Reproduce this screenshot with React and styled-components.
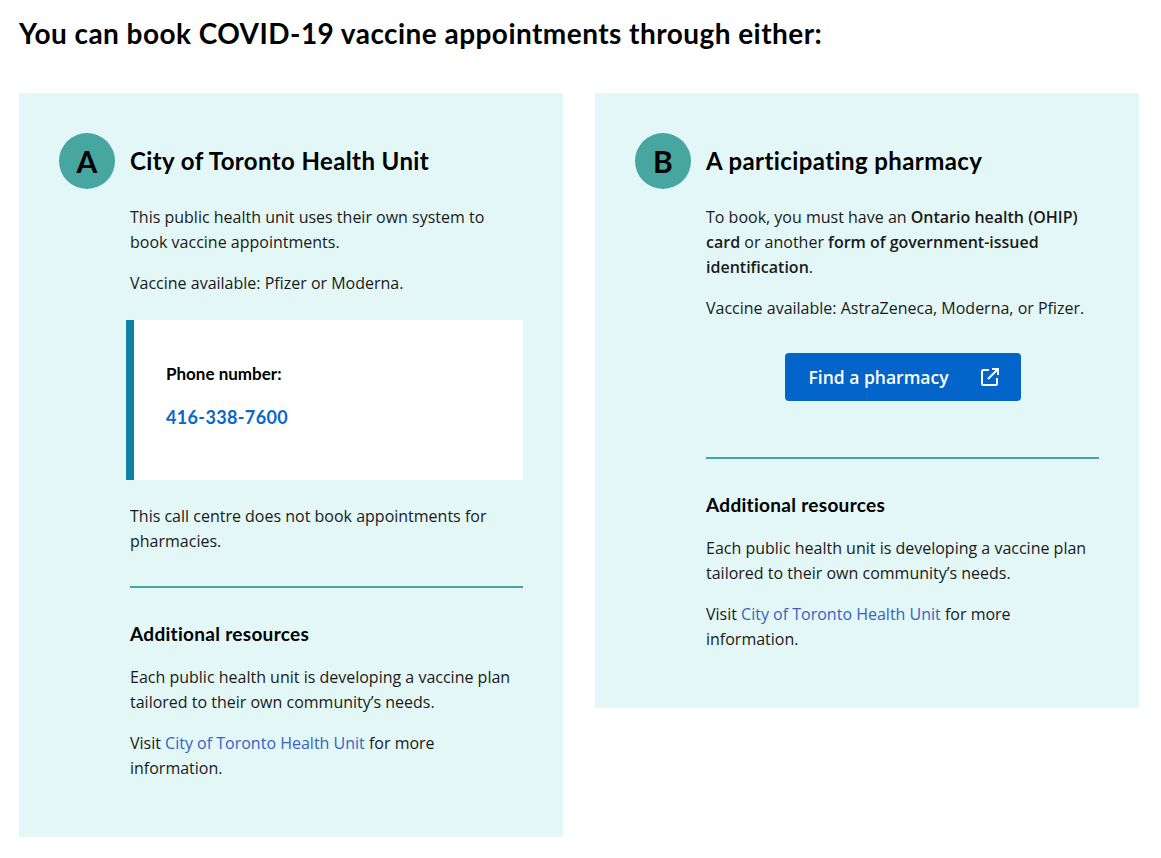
import React from "react";
import styled, { createGlobalStyle } from "styled-components";

const Global = createGlobalStyle`
  html, body { margin: 0; padding: 0; background: #fff; }
  body { font-family: "Open Sans", sans-serif; font-size: 16px; line-height: 25px; color: #1a1a1a; }
`;
const headingFont = `"Lato", "Liberation Sans", sans-serif`;

const Page = styled.main`
  padding: 13px 22px 21px 19px;
`;
const Title = styled.h2`
  margin: 0 0 40px;
  font-family: ${headingFont};
  font-size: 28px;
  line-height: 40px;
  font-weight: 700;
  letter-spacing: 0.45px;
  color: #000;
`;
const Columns = styled.div`
  display: grid;
  grid-template-columns: 544px 544px;
  gap: 32px;
  align-items: start;
`;
const Card = styled.section`
  background: #e2f7f6;
  padding: 40px 40px ${(p) => p.$bottom}px;
`;
const CardHead = styled.div`
  display: flex;
  align-items: center;
  gap: 15px;
  margin-bottom: 16px;
`;
const Badge = styled.div`
  width: 56px;
  height: 56px;
  border-radius: 50%;
  background: #47a7a0;
  display: flex;
  align-items: center;
  justify-content: center;
  font-family: ${headingFont};
  font-size: 30px;
  font-weight: 700;
  color: #000;
`;
const CardTitle = styled.h3`
  margin: 0;
  font-family: ${headingFont};
  font-size: 24px;
  line-height: 32px;
  font-weight: 700;
  letter-spacing: 0.4px;
  color: #000;
`;
const Body = styled.div`
  padding-left: 71px;
`;
const Para = styled.p`
  margin: 0 0 16px;
`;
const Strong = styled.strong`
  font-weight: 600;
`;
const Callout = styled.div`
  margin: 24px 0 24px -4px;
  height: 160px;
  box-sizing: border-box;
  background: #fff;
  border-left: 8px solid #0f81a8;
  padding: 41px 32px;
  font-family: ${headingFont};
`;
const CalloutLabel = styled.div`
  font-size: 17px;
  font-weight: 700;
  line-height: 25px;
  color: #000;
  margin-bottom: 19px;
`;
const Phone = styled.a`
  display: block;
  font-size: 18px;
  font-weight: 700;
  line-height: 25px;
  letter-spacing: 0.35px;
  color: #0b66cc;
  text-decoration: none;
`;
const Divider = styled.hr`
  border: 0;
  height: 2px;
  background: #47a7a0;
  margin: ${(p) => p.$top}px 0 32px;
`;
const SubTitle = styled.h4`
  margin: 0 0 17px;
  font-family: ${headingFont};
  font-size: 19px;
  line-height: 28px;
  font-weight: 700;
  letter-spacing: 0.3px;
  color: #000;
`;
const TextLink = styled.a`
  color: #3b5fc4;
  text-decoration: none;
`;
const ButtonRow = styled.div`
  display: flex;
  justify-content: center;
  margin-top: 32px;
`;
const Button = styled.a`
  display: flex;
  align-items: center;
  justify-content: space-between;
  box-sizing: border-box;
  width: 236px;
  height: 48px;
  padding: 0 22px 0 24px;
  background: #0365c9;
  border-radius: 4px;
  color: #fff;
  font-weight: 600;
  font-size: 17.5px;
  text-decoration: none;
`;
const ExternalIcon = () => (
  <svg width="18" height="18" viewBox="0 0 18 18" fill="none" stroke="#fff" strokeWidth="2">
    <path d="M8 2H2.5A1.5 1.5 0 0 0 1 3.500V15.500A1.500 1.500 0 0 0 2.500 17H14.500A1.500 1.500 0 0 0 16 15.500V10" />
    <path d="M11 1H17V7M17 1L7 11" />
  </svg>
);

const Resources = () => (
  <>
    <SubTitle>Additional resources</SubTitle>
    <Para>Each public health unit is developing a vaccine plan tailored to their own community’s needs.</Para>
    <Para>
      Visit <TextLink href="#">City of Toronto Health Unit</TextLink> for more information.
    </Para>
  </>
);

export default function App() {
  return (
    <Page>
      <Global />
      <Title>You can book COVID-19 vaccine appointments through either:</Title>
      <Columns>
        <Card $bottom={40}>
          <CardHead>
            <Badge>A</Badge>
            <CardTitle>City of Toronto Health Unit</CardTitle>
          </CardHead>
          <Body>
            <Para>This public health unit uses their own system to book vaccine appointments.</Para>
            <Para>Vaccine available: Pfizer or Moderna.</Para>
            <Callout>
              <CalloutLabel>Phone number:</CalloutLabel>
              <Phone href="#">416-338-7600</Phone>
            </Callout>
            <Para>This call centre does not book appointments for pharmacies.</Para>
            <Divider $top={32} />
            <Resources />
          </Body>
        </Card>
        <Card $bottom={40}>
          <CardHead>
            <Badge>B</Badge>
            <CardTitle>A participating pharmacy</CardTitle>
          </CardHead>
          <Body>
            <Para>
              To book, you must have an <Strong>Ontario health (OHIP) card</Strong> or another{" "}
              <Strong>form of government-issued identification</Strong>.
            </Para>
            <Para>Vaccine available: AstraZeneca, Moderna, or Pfizer.</Para>
            <ButtonRow>
              <Button href="#">
                Find a pharmacy
                <ExternalIcon />
              </Button>
            </ButtonRow>
            <Divider $top={56} />
            <Resources />
          </Body>
        </Card>
      </Columns>
    </Page>
  );
}
